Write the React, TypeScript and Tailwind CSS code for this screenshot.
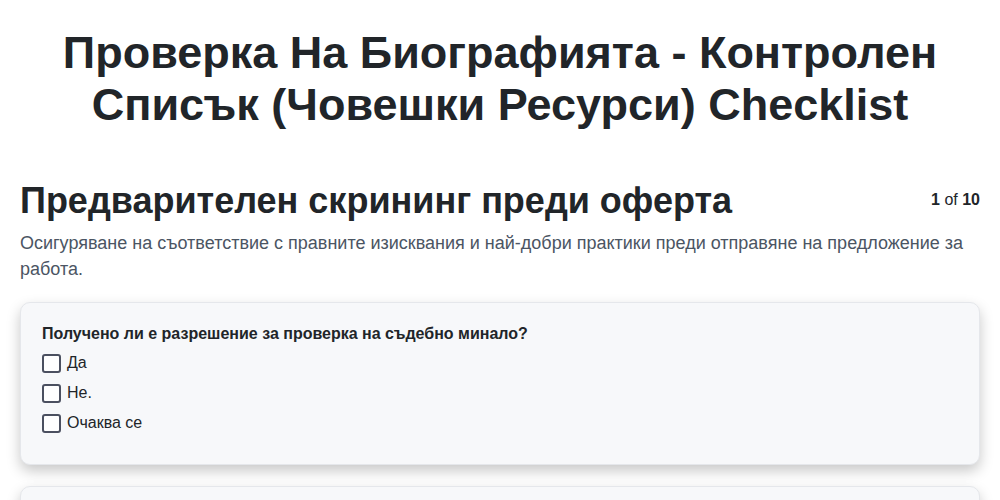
import React from "react";

function Box({ label }: { label: string }) {
  return (
    <label className="flex items-center gap-[6px] h-[30px]">
      <span className="w-[19px] h-[19px] border-2 border-[#4b5060] rounded-[3px] bg-white shrink-0" />
      <span className="text-[16px] text-[#212529]">{label}</span>
    </label>
  );
}

export default function App() {
  return (
    <div className="min-h-screen bg-white px-[20px] text-[#212529]" style={{ fontFamily: '"Liberation Sans", Arial, sans-serif' }}>
      <h1 className="text-[45px] leading-[52px] font-bold text-center pt-[27px] px-[30px]">
        Проверка На Биографията - Контролен Списък (Човешки Ресурси) Checklist
      </h1>
      <div className="mt-[48px] flex items-start justify-between">
        <h2 className="text-[36px] leading-[44px] font-bold">Предварителен скрининг преди оферта</h2>
        <div className="text-[16px] mt-[9px] text-[#212529]">
          <span className="font-bold">1</span> of <span className="font-bold">10</span>
        </div>
      </div>
      <p className="text-[18px] leading-[26px] text-[#4b5563] mt-[7px]">
        Осигуряване на съответствие с правните изисквания и най-добри практики преди отправяне на предложение за работа.
      </p>
      <div className="mt-[20px] rounded-[10px] border border-[#e5e7eb] bg-[#f7f8fa] shadow-[0_6px_14px_rgba(0,0,0,0.22)] px-[21px] pt-[19px] pb-[26px]">
        <div className="text-[16px] font-bold mb-[2px]">Получено ли е разрешение за проверка на съдебно минало?</div>
        <Box label="Да" />
        <Box label="Не." />
        <Box label="Очаква се" />
      </div>
      <div className="mt-[21px] rounded-[10px] border border-[#e5e7eb] bg-[#f7f8fa] shadow-[0_6px_14px_rgba(0,0,0,0.22)] h-[160px]" />
    </div>
  );
}
